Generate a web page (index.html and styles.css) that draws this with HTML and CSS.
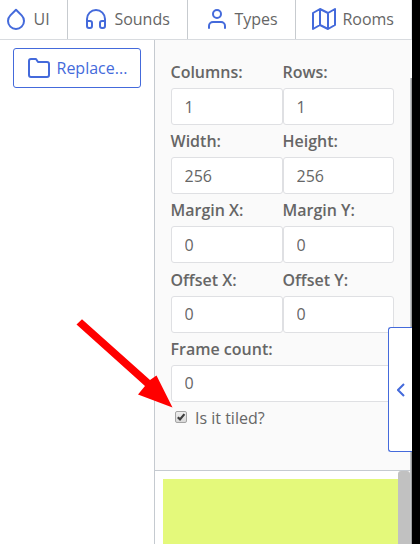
FILE: index.html
```html
<!DOCTYPE html>
<html lang="en">
<head>
<meta charset="utf-8">
<title>Texture editor</title>
<link rel="stylesheet" href="styles.css">
</head>
<body>
<div class="app">
  <nav class="tabs">
    <div class="tab tab-ui"><svg class="icon" viewBox="0 0 24 24"><path d="M12 2.69l5.66 5.66a8 8 0 1 1-11.31 0z"/></svg><span>UI</span></div>
    <div class="tab tab-sounds"><svg class="icon" viewBox="0 0 24 24"><path d="M3 18v-6a9 9 0 0 1 18 0v6"/><path d="M21 19a2 2 0 0 1-2 2h-1a2 2 0 0 1-2-2v-3a2 2 0 0 1 2-2h3zM3 19a2 2 0 0 0 2 2h1a2 2 0 0 0 2-2v-3a2 2 0 0 0-2-2H3z"/></svg><span>Sounds</span></div>
    <div class="tab tab-types"><svg class="icon" viewBox="0 0 24 24"><path d="M20 21v-2a4 4 0 0 0-4-4H8a4 4 0 0 0-4 4v2"/><circle cx="12" cy="7" r="4"/></svg><span>Types</span></div>
    <div class="tab tab-rooms"><svg class="icon" viewBox="0 0 24 24"><path d="M1 6v16l7-4 8 4 7-4V2l-7 4-8-4-7 4zM8 2v16M16 6v16"/></svg><span>Rooms</span></div>
  </nav>
  <div class="workspace">
    <aside class="sidebar">
      <button class="replace"><svg class="icon" viewBox="0 0 24 24"><path d="M22 19a2 2 0 0 1-2 2H4a2 2 0 0 1-2-2V5a2 2 0 0 1 2-2h5l2 3h9a2 2 0 0 1 2 2z"/></svg><span>Replace...</span></button>
    </aside>
    <main class="main">
      <form class="settings">
        <label class="field"><b>Columns:</b><input value="1"></label>
        <label class="field"><b>Rows:</b><input value="1"></label>
        <label class="field"><b>Width:</b><input value="256"></label>
        <label class="field"><b>Height:</b><input value="256"></label>
        <label class="field"><b>Margin X:</b><input value="0"></label>
        <label class="field"><b>Margin Y:</b><input value="0"></label>
        <label class="field"><b>Offset X:</b><input value="0"></label>
        <label class="field"><b>Offset Y:</b><input value="0"></label>
        <label class="field wide"><b>Frame count:</b><input value="0"></label>
        <div class="check"><svg class="box" viewBox="0 0 12 12"><defs><linearGradient id="g" x2="0" y2="1"><stop stop-color="#eee"/><stop offset="1" stop-color="#d8d8d8"/></linearGradient></defs><rect x=".5" y=".5" width="11" height="11" rx="1.5" fill="url(#g)" stroke="#a4a4a4"/><path d="M2.8 6.2l2.2 2.2 4.4-5.3" fill="none" stroke="#3d3d3d" stroke-width="2.2"/></svg><span>Is it tiled?</span></div>
      </form>
      <div class="preview"><div class="canvas"></div><div class="scrollbar"></div></div>
    </main>
  </div>
  <div class="edge"></div>
  <div class="shade"></div>
  <div class="drawer"><svg viewBox="0 0 8 14"><path d="M7 1L1 7l6 6"/></svg></div>
  <svg class="arrow" viewBox="0 0 96 90"><path d="M5.5 .3L73.5 61 80 56.5 96 88.5 61.5 75.5 68.5 67 0 5.5z" transform="translate(-.5 0)" fill="#f00"/></svg>
</div>
</body>
</html>
```
FILE: styles.css
```css
* { box-sizing: border-box; }
body { margin: 0; background: #fff; color: #666; font: 16px/24px "Open Sans", sans-serif; }
.app { position: relative; width: 420px; height: 544px; overflow: hidden; display: flex; flex-direction: column; }
.tabs { display: flex; height: 40px; width: 412px; border-bottom: 1px solid #d8dbdf; }
.tab { display: flex; align-items: center; gap: 6px; border-right: 1px solid #c7cbcf; white-space: nowrap; padding-bottom: 1px; }
.tab-ui { width: 68px; padding-left: 3.6px; }
.tab-sounds { width: 120px; padding-left: 16.4px; }
.tab-types { width: 108px; padding-left: 16.5px; }
.tab-rooms { width: 116px; padding-left: 16.4px; border-right-color: #e3e5e8; }
.icon { width: 24px; height: 24px; flex: none; fill: none; stroke: #446adb; stroke-width: 2; stroke-linecap: round; stroke-linejoin: round; }
.workspace { display: flex; flex: 1; width: 412px; }
.sidebar { width: 154px; padding: 8px 13px; }
.replace { display: flex; align-items: center; gap: 6px; width: 128px; height: 40px; padding: 0 0 0 12.5px; border: 1px solid #446adb; border-radius: 3px; background: #fff; color: #446adb; font: inherit; white-space: nowrap; }
.main { width: 258px; display: flex; flex-direction: column; border-left: 1px solid #c5cad0; }
.settings { height: 431px; padding: 16px 18px 0 16px; background: #fafafa; display: grid; grid-template-columns: 112px 111px; grid-auto-rows: 69.2px; align-content: start; border-bottom: 1px solid #c5cad0; }
.field { display: flex; flex-direction: column; }
.wide { grid-column: span 2; }
.field b { margin-left: -.5px; font-weight: 600; line-height: 32px; height: 32px; }
.field input { width: 100%; height: 37px; border: 1px solid #dfe0e3; border-radius: 3px; padding: 0 12.5px; color: #666; font: inherit; background: #fff; }
.check { grid-column: span 2; display: flex; align-items: flex-start; gap: 8px; padding: 4px 0 0 4px; }
.box { width: 12px; height: 12px; margin-top: 5px; }
.preview { flex: 1; display: flex; padding-left: 8px; }
.canvas { width: 235px; margin-top: 8px; background: #e4f97b; }
.scrollbar { width: 12px; background: #c1c1c1; border-radius: 3px 3px 0 0; }
.edge { position: absolute; left: 412px; top: 0; width: 8px; height: 544px; background: #000; }
.shade { position: absolute; left: 410px; top: 78px; width: 2px; height: 466px; background: linear-gradient(90deg, #d8dcdf, #888); }
.drawer { position: absolute; left: 388px; top: 327px; width: 24px; height: 125px; border: 1px solid #446adb; border-right: 0; border-radius: 3px 0 0 3px; background: #fff; display: flex; align-items: center; padding-left: 8px; }
.drawer svg { width: 8px; height: 14px; fill: none; stroke: #446adb; stroke-width: 2; }
.arrow { position: absolute; left: 77px; top: 319px; width: 96px; height: 90px; overflow: visible; }
```
